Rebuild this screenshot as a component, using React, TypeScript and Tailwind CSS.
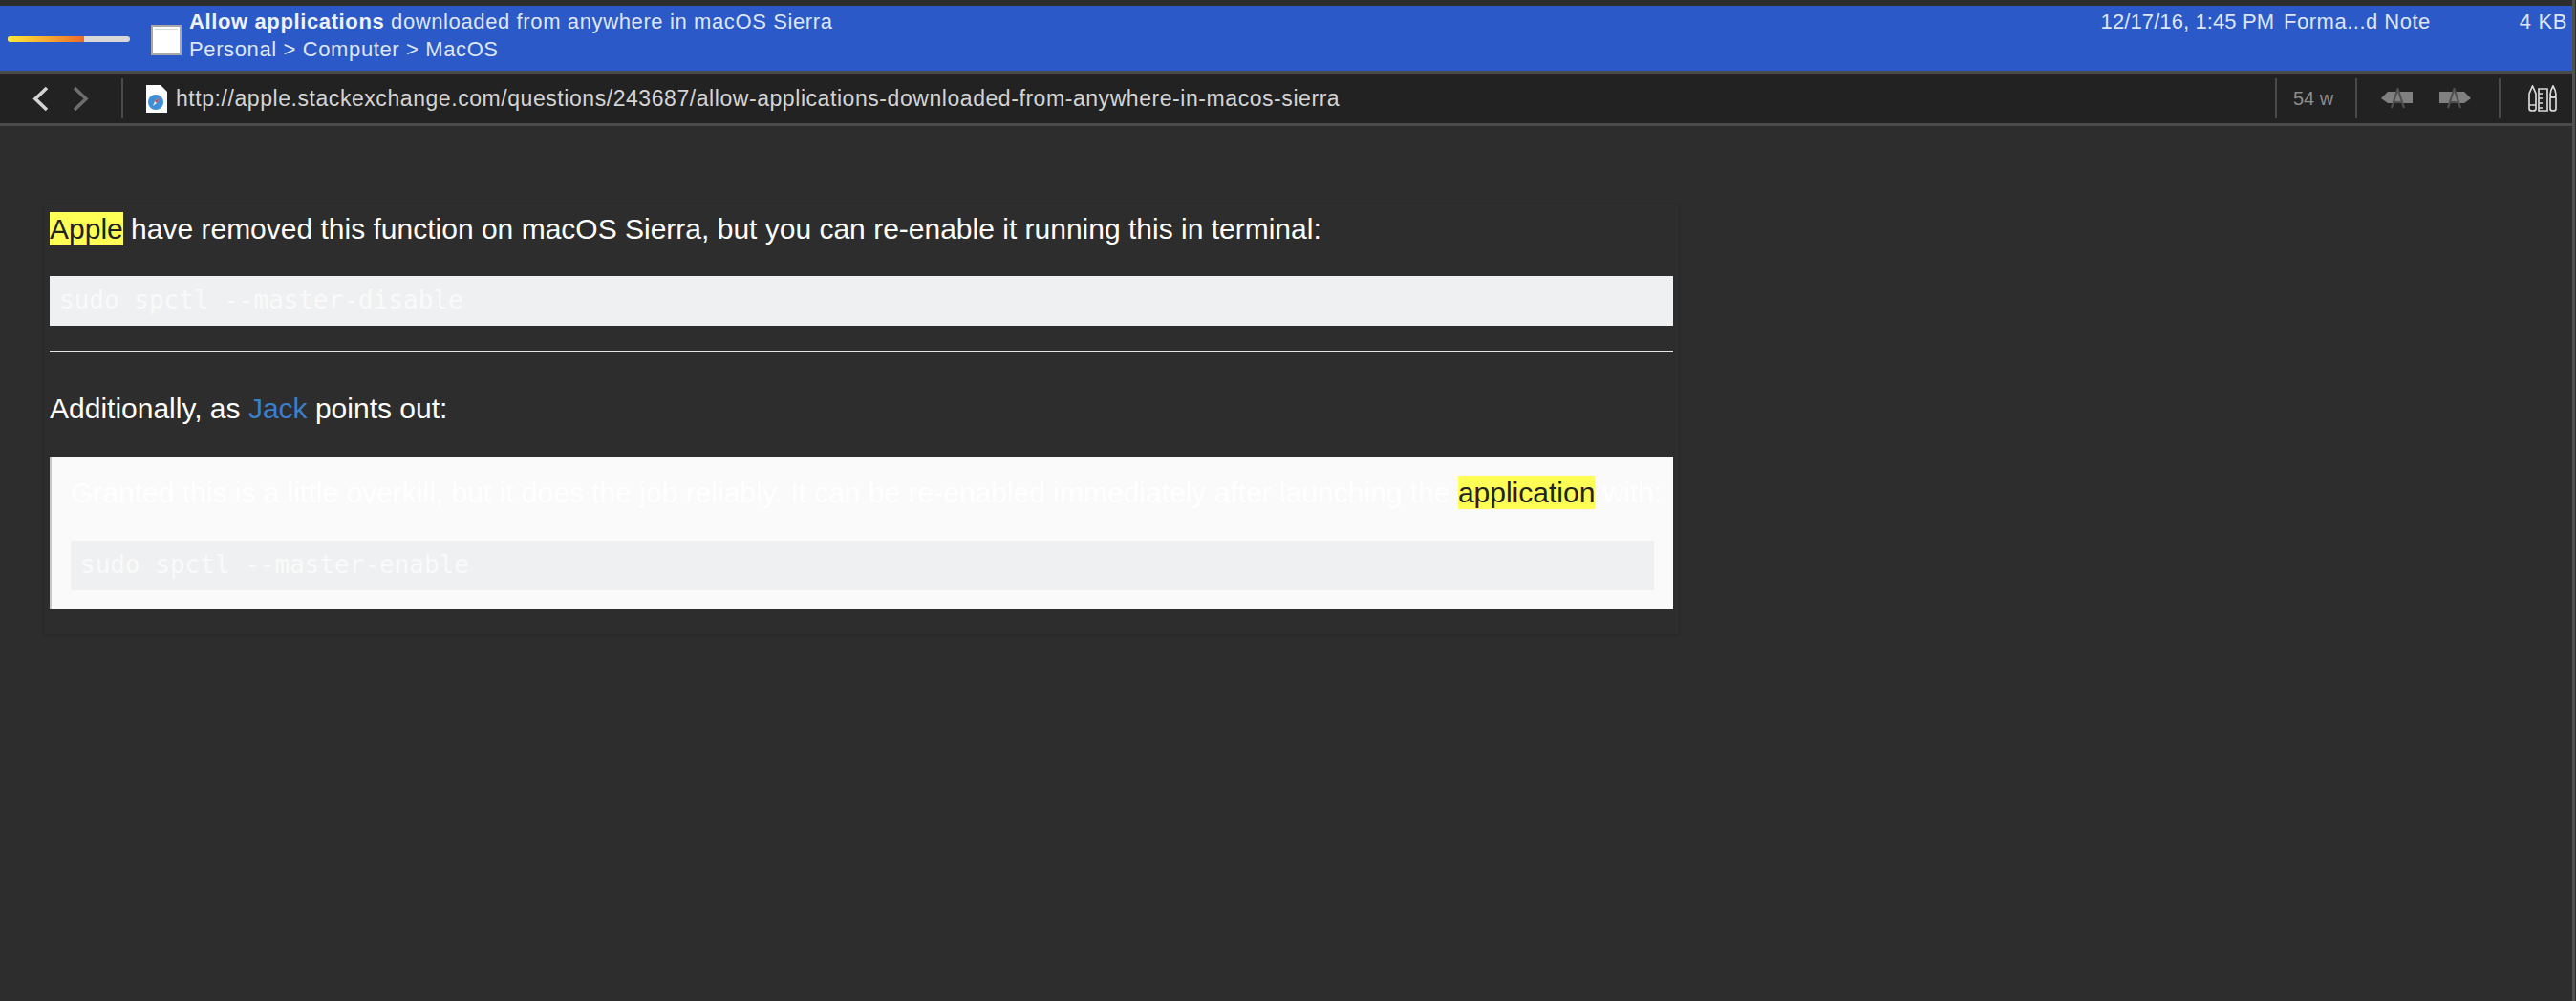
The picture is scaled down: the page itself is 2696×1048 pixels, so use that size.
function FontDown() {
  return (
    <svg width="33" height="22" viewBox="0 0 33 22">
      <path d="M0 11 L7 4 H33 V16 H7 Z" fill="#808080" />
      <path d="M11 21 L17.5 1 L24 21 M13.5 15 H21.5" fill="none" stroke="#505050" strokeWidth="2.2" />
    </svg>
  );
}

function FontUp() {
  return (
    <svg width="33" height="22" viewBox="0 0 33 22">
      <path d="M33 11 L26 4 H0 V16 H26 Z" fill="#808080" />
      <path d="M9 21 L15.5 1 L22 21 M11.5 15 H19.5" fill="none" stroke="#505050" strokeWidth="2.2" />
    </svg>
  );
}

function Tools() {
  return (
    <svg width="30" height="28" viewBox="0 0 30 28" fill="none" stroke="#d8d8d8" strokeWidth="1.7">
      <path d="M1 9 L4.5 1 L8 9 V25 Q8 27 4.5 27 Q1 27 1 25 Z M1 21 H8" />
      <path d="M11 4 H20 V27 H11 Z M11 9 H15 M11 14 H15 M11 19 H15 M11 24 H15" />
      <path d="M23 10 Q23 6 26 1 Q29 6 29 10 Q29 13 26 13 Q23 13 23 10 Z" />
      <path d="M23 13 H29 V25 Q29 27 26 27 Q23 27 23 25 Z" />
    </svg>
  );
}

function PageIcon() {
  return (
    <svg width="22" height="29" viewBox="0 0 22 29">
      <path d="M0 0 H15 L22 7 V29 H0 Z" fill="#ffffff" />
      <circle cx="10" cy="18" r="8" fill="#3d8fd8" />
      <path d="M14 13 L11 19 L7 22 L9 17 Z" fill="#e8e8e8" />
      <path d="M14 13 L11 19 L9 17 Z" fill="#d9453a" />
    </svg>
  );
}

function Back() {
  return (
    <svg width="17" height="27" viewBox="0 0 17 27" fill="none" stroke="#d4d4d4" strokeWidth="3.6">
      <path d="M15 2 L3 13.5 L15 25" />
    </svg>
  );
}

function Forward() {
  return (
    <svg width="17" height="27" viewBox="0 0 17 27" fill="none" stroke="#6e6e6e" strokeWidth="3.6">
      <path d="M2 2 L14 13.5 L2 25" />
    </svg>
  );
}

export default function App() {
  const sans = "font-['Liberation_Sans',Arial,sans-serif]";

  return (
    <div className={`flex h-[1048px] w-[2696px] overflow-hidden bg-[#2d2d2d] ${sans}`}>
      <div className="w-[2692px] pt-[6px]">
        {/* Selected note row */}
        <div className="flex h-[68px] bg-[#2b5ac8] text-[22px] leading-[29px] tracking-[0.62px] text-[#dde5f7]">
          <div className="ml-[8px] mt-[32px] flex h-[6px] w-[128px] overflow-hidden rounded-full bg-[#d8d8d8]">
            <div className="w-[80px] bg-gradient-to-r from-[#fde93a] to-[#ea6a2a]" />
          </div>
          <div className="ml-[22px] mt-[20px] h-[32px] w-[32px] border-2 border-[#a8a8a8] bg-white p-[2px]">
            <div className="h-[1px] w-full bg-[#d8d8d8]" />
          </div>
          <div className="ml-[8px] mt-[2px]">
            <div>
              <span className="font-bold text-[#eef2fb]">Allow applications</span> downloaded from anywhere in macOS Sierra
            </div>
            <div>Personal &gt; Computer &gt; MacOS</div>
          </div>
          <div className="ml-auto mt-[2px] flex">
            <span className="tracking-[0.1px]">12/17/16, 1:45 PM</span>
            <span className="ml-[10px] tracking-[0.5px]">Forma...d Note</span>
            <span className="ml-[93px] mr-[5px]">4 KB</span>
          </div>
        </div>

        {/* Toolbar */}
        <div className="flex h-[58px] items-center border-y-[3px] border-[#4a4a4a] bg-[#222222] text-[#d4d4d4]">
          <div className="ml-[34px]">
            <Back />
          </div>
          <div className="ml-[25px]">
            <Forward />
          </div>
          <div className="ml-[34px] h-[42px] w-[2px] bg-[#4a4a4a]" />
          <div className="ml-[24px] flex items-center">
            <PageIcon />
          </div>
          <div className="ml-[9px] text-[23px] tracking-[0.56px]">
            http://apple.stackexchange.com/questions/243687/allow-applications-downloaded-from-anywhere-in-macos-sierra
          </div>
          <div className="ml-auto h-[42px] w-[2px] bg-[#4a4a4a]" />
          <div className="w-[82px] pr-[6px] text-center text-[20px] text-[#8c8c8c]">54 w</div>
          <div className="h-[42px] w-[2px] bg-[#4a4a4a]" />
          <div className="ml-[25px] flex gap-[28px]">
            <FontDown />
            <FontUp />
          </div>
          <div className="ml-[29px] h-[42px] w-[2px] bg-[#4a4a4a]" />
          <div className="ml-[29px] mr-[16px]">
            <Tools />
          </div>
        </div>

        {/* Note body */}
        <div className="ml-[46px] mt-[82px] w-[1711px] px-[6px] pt-[8px] pb-[26px] text-[30px] leading-[36px] text-white shadow-[0_1px_3px_rgba(0,0,0,0.18)]">
          <p>
            <span className="bg-[#ffff55] py-[1px] text-[#222222]">Apple</span> have removed this function on macOS Sierra, but you can re-enable it running this in terminal:
          </p>
          <pre className="mt-[31px] h-[52px] bg-[#eff0f1] px-[10px] font-['DejaVu_Sans_Mono',monospace] text-[26px] leading-[50px] text-[#fafafa]">sudo spctl --master-disable</pre>
          <hr className="mt-[26px] h-[2px] border-0 bg-[#e6e6e6]" />
          <p className="mt-[41px]">
            Additionally, as <span className="text-[#3a7fc8]">Jack</span> points out:
          </p>
          <blockquote className="mt-[32px] h-[160px] border-l-2 border-[#c8c8c8] bg-[#fafafa] pl-[20px] pr-[20px] pt-[20px] text-[30px]">
            <p className="whitespace-nowrap">
              Granted this is a little overkill, but it does the job reliably. It can be re-enabled immediately after launching the <span className="bg-[#ffff55] py-[1px] text-[#222222]">application</span> with:
            </p>
            <pre className="mt-[32px] h-[52px] bg-[#eff0f1] px-[10px] font-['DejaVu_Sans_Mono',monospace] text-[26px] leading-[50px] text-[#fafafa]">sudo spctl --master-enable</pre>
          </blockquote>
        </div>
      </div>
      {/* Window edge */}
      <div className="w-[3px] bg-[#4f4f4f]" />
    </div>
  );
}
